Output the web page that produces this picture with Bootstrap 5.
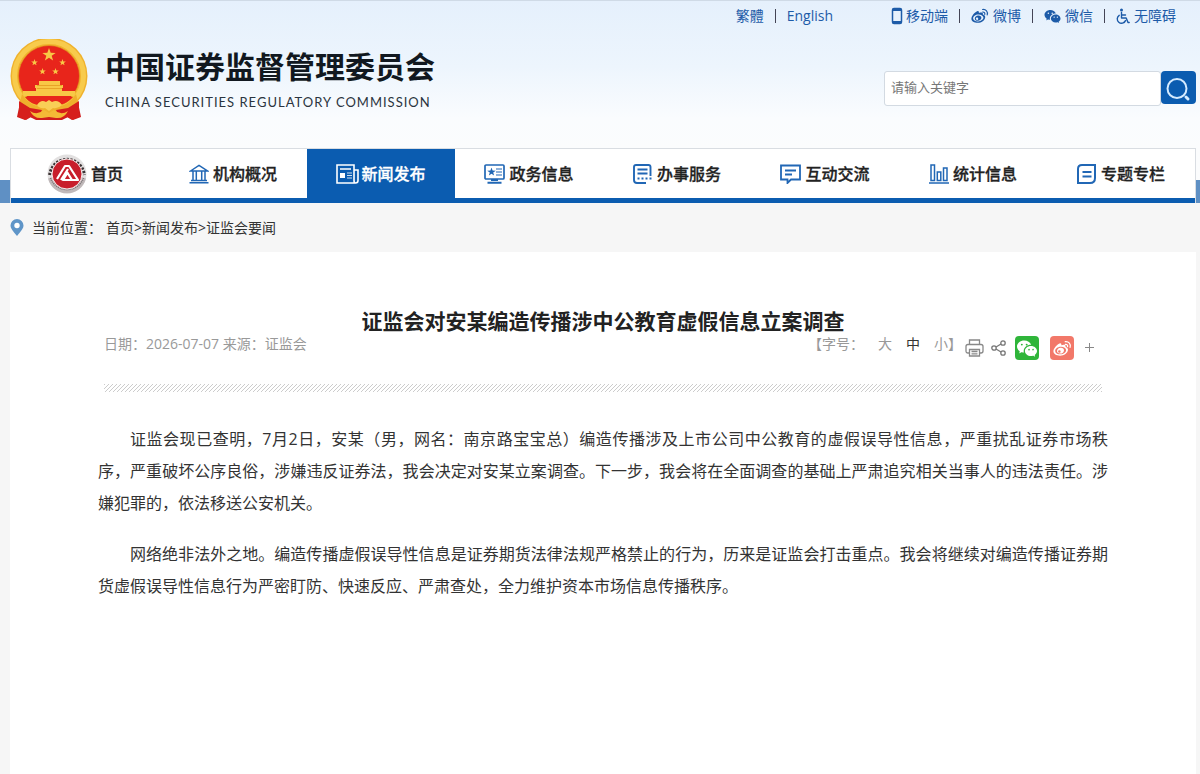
<!DOCTYPE html>
<html lang="zh-CN">
<head>
<meta charset="utf-8">
<meta name="viewport" content="width=device-width, initial-scale=1">
<title>证监会对安某编造传播涉中公教育虚假信息立案调查</title>
<link href="https://cdn.jsdelivr.net/npm/bootstrap@5.3.0/dist/css/bootstrap.min.css" rel="stylesheet">
<style>
  :root { --brand: #0b5cb0; --link: #1d5ba8; }
  body { font-family: "Open Sans", "Noto Sans CJK SC", sans-serif; font-size: 14px; color: #333; background: #f6f6f6; }
  a { color: inherit; text-decoration: none; }
  svg { display: block; flex: none; }
  .wrap { margin-left: 10px; margin-right: 4px; }
  .site-head { background: linear-gradient(#e5f0fc, #edf5fd 45%, #fafcfe 80%, #fbfcfd); border-top: 1px solid #cfdae6; }
  .top-links { height: 30px; line-height: 28px; color: var(--link); padding-right: 20px; }
  .top-links .sep { width: 1px; height: 14px; background: #445; margin: 0 11px; }
  .top-links .to-mobile { margin-left: 57px; gap: 2px; }
  .brand-row { height: 117px; }
  .org { color: #111820; padding-left: 17px; }
  .org-cn { font: 700 30px/36px "Noto Sans CJK SC", sans-serif; }
  .org-en { font: 13px/20px Lato, sans-serif; letter-spacing: 1px; margin-top: 9px; color: #2b3440; }
  .search { width: 312px; margin-top: 40px; }
  .search .form-control { height: 35px; border: 1px solid #d3dae2; border-radius: 3px; padding: 0 6px 3px; font-size: 13px; }
  .search .form-control::placeholder { color: #777; }
  .search button { width: 35px; height: 33px; padding: 0; background: var(--brand); border: 0; border-radius: 4px; }
  .nav-band { background: linear-gradient(#fbfcfd 32px, #5f90c4 32px); }
  .main-nav { background: #fff; border: 1px solid #d9dde2; border-bottom: 0; height: 55px; box-shadow: inset 0 -5px var(--brand); padding-bottom: 5px; }
  .main-nav a { font-size: 16px; font-weight: 500; color: #222; gap: 4px; -webkit-text-stroke: .3px; }
  .main-nav a svg { color: #2167b5; }
  .main-nav .current { background: var(--brand); color: #fff; gap: 2px; }
  .main-nav .current svg { color: #fff; }
  .crumbs { height: 49px; }
  .sheet { background: #fff; min-height: 522px; padding: 55px 88px 40px 88px; }
  .headline { font-size: 21px; line-height: 28px; font-weight: 700; color: #222; margin: 0; }
  .meta { color: #999; line-height: 18px; margin: 0 6px; height: 49px; }
  .meta button { border: 0; background: none; padding: 0; color: inherit; }
  .meta .sized { color: #333; }
  .meta .sizes { gap: 14px; }
  .meta .tools { padding: 1px 7px 0 3px; gap: 7px; }
  .meta .shares { gap: 11px; padding-left: 2px; }
  .meta .tile { width: 24px; height: 24px; border-radius: 4px; color: #fff; }
  .meta .wx { background: #2fb53a; }
  .meta .wb { background: #f27869; }
  .hatch { height: 8px; margin: 0 6px; background: linear-gradient(135deg, #ccc 12.5%, #fff 12.5% 50%, #ccc 50% 62.5%, #fff 62.5%) 0 0 / 4px 4px; }
  .story { font-size: 16px; line-height: 32px; text-align: justify; padding-top: 31px; }
  .story p { text-indent: 2em; margin-bottom: 19px; }
</style>
</head>
<body>
<svg width="0" height="0" class="position-absolute" aria-hidden="true">
  <symbol id="wechat" viewBox="0 0 16 16"><g fill="currentColor"><path d="M11.176 14.429c-2.665 0-4.826-1.8-4.826-4.018 0-2.22 2.159-4.02 4.824-4.02S16 8.191 16 10.411c0 1.21-.65 2.301-1.666 3.036a.32.32 0 0 0-.12.366l.218.81a.6.6 0 0 1 .029.117.166.166 0 0 1-.162.162.2.2 0 0 1-.092-.03l-1.057-.61a.5.5 0 0 0-.256-.074.5.5 0 0 0-.142.021 5.7 5.7 0 0 1-1.576.22M9.064 9.542a.647.647 0 1 0 .557-1 .645.645 0 0 0-.646.647.6.6 0 0 0 .09.353Zm3.232.001a.646.646 0 1 0 .546-1 .645.645 0 0 0-.644.644.63.63 0 0 0 .098.356"/><path d="M0 6.826c0 1.455.781 2.765 2.001 3.656a.385.385 0 0 1 .143.439l-.161.6-.1.373a.5.5 0 0 0-.032.14.19.19 0 0 0 .193.193q.06 0 .111-.029l1.268-.733a.6.6 0 0 1 .308-.088q.088 0 .171.025a6.8 6.8 0 0 0 1.625.26 4.5 4.5 0 0 1-.177-1.251c0-2.936 2.785-5.02 5.824-5.02l.15.002C10.587 3.429 8.392 2 5.796 2 2.596 2 0 4.16 0 6.826m4.632-1.555a.77.77 0 1 1-1.54 0 .77.77 0 0 1 1.54 0m3.875 0a.77.77 0 1 1-1.54 0 .77.77 0 0 1 1.54 0"/></g></symbol>
  <symbol id="weibo" viewBox="0 0 18 16"><path fill="currentColor" fill-rule="evenodd" d="M6.2 3.2c1.2-.5 2 .2 1.7 1.8 2.200-.9 4.500-.6 4 1.500 1.500.5 2.500 1.400 2.300 3-.3 2.900-3.700 5.300-7.500 5.300C3.200 14.800.4 13.300.4 10.700c0-2.700 3.300-6.600 5.800-7.500ZM7.300 6.400c-2.900.1-5.200 1.900-5.200 3.900s2.200 3.300 5 3.200c3-.2 5.300-2 5.300-3.900 0-2-2.300-3.300-5.100-3.200Zm-.2 1c2-.2 3.400.9 3.300 2.400-.1 1.700-1.600 2.900-3.500 3-1.900.1-3.200-1-3.100-2.400.1-1.600 1.500-2.900 3.300-3Zm-1.100 2.200a1.200 1.200 0 1 0 .1 2.400 1.200 1.200 0 0 0-.1-2.400Z"/><g fill="none" stroke="currentColor" stroke-width="1.200" stroke-linecap="round"><path d="M11.600 1.500c3.300-.5 5.600 2.400 4.600 5.400M11.700 4c1.500-.1 2.400 1 2.100 2.300"/></g></symbol>
  <symbol id="star" viewBox="-10 -10 20 20"><path d="M0-10 2.400-3.200 9.500-3 3.800 1.200 5.900 8 0 4-5.900 8-3.800 1.200-9.500-3-2.400-3.200Z"/></symbol>
</svg>

<header class="site-head">
  <div class="wrap">
    <div class="top-links d-flex justify-content-end align-items-center">
      <a href="#" lang="zh-Hant">繁體</a><span class="sep"></span><a href="#">English</a>
      <a href="#" class="to-mobile d-flex align-items-center"><svg width="14" height="18" viewBox="0 0 14 18" fill="none" stroke="currentColor"><rect x="2.500" y="1.500" width="9" height="15" rx="1.500" stroke-width="1.500"/><path d="M3 3h8M3 15h8" stroke-width="2"/></svg>移动端</a><span class="sep"></span>
      <a href="#" class="d-flex align-items-center gap-1"><svg width="18" height="16"><use href="#weibo"/></svg>微博</a><span class="sep"></span>
      <a href="#" class="d-flex align-items-center gap-1"><svg width="17" height="16" viewBox="0 0 17 16"><use href="#wechat" width="17" height="16"/></svg>微信</a><span class="sep"></span>
      <a href="#" class="d-flex align-items-center gap-1"><svg width="14" height="18" viewBox="1 0 14 18" fill="none" stroke="currentColor" stroke-width="1.400" stroke-linecap="round" stroke-linejoin="round"><circle cx="6.500" cy="3" r="1.500" fill="currentColor" stroke="none"/><path d="M6.500 5.500V11h4.700l1.800 4.500h1.200M6.500 8h4M4.200 8.300a4.300 4.300 0 1 0 6.300 5.300"/></svg>无障碍</a>
    </div>
    <div class="brand-row d-flex justify-content-between">
      <a href="#" class="d-flex pt-2" aria-label="中国证券监督管理委员会">
        <svg width="78" height="82" viewBox="0 0 78 82">
          <path d="M12 54 7 78l8 3 5-3 6 3h26l6-3 5 3 8-3-5-24Z" fill="#cf1d1c"/>
          <circle cx="39" cy="37" r="38.500" fill="#f0b22c"/>
          <circle cx="39" cy="37" r="34.500" fill="none" stroke="#f8cb4c" stroke-width="5"/>
          <circle cx="39" cy="37" r="30.500" fill="#e8251b" stroke="#dc9a20" stroke-width=".6"/>
          <g fill="#f8c846"><use href="#star" x="32" y="9" width="14" height="14"/><use href="#star" x="21" y="20" width="7" height="7"/><use href="#star" x="49" y="20" width="7" height="7"/><use href="#star" x="29" y="29" width="7" height="7"/><use href="#star" x="42" y="29" width="7" height="7"/>
          <path d="M29 42h21v4h3v3h-1v3h13q1 3-1 5H14q-2-2-1-5h13v-3h-1v-3h4Z"/></g>
          <path d="M27 46.500h25M27 49.500h25" stroke="#e39b20" stroke-width=".8"/>
          <path d="M15 58h48c-5 6-12 8-18 9H33c-7-1-14-3-18-9Z" fill="#e8251b"/>
          <path d="M12 55q9 14 27 14t27-14l2 8Q58 77 39 77T10 63Z" fill="#efb02c"/>
          <path d="M27 66q4-6 9-3l3-2 3 2q6-3 10 3-4 4-9 3l-4 3-4-3q-5 1-8-3Z" fill="#f9cf56"/>
          <path d="m9 62 11 7 12 2-4 9-7-2-5 3-7-3Zm60 0-11 7-12 2 4 9 7-2 5 3 7-3Z" fill="#d61f1c"/>
          <path d="M20 72q7 5 14-1l5 3 5-3q7 6 14 1-4 8-12 7l-7-1-7 1q-8 1-12-7Z" fill="#f4b936"/>
        </svg>
        <span class="org pt-2"><span class="org-cn d-block">中国证券监督管理委员会</span><span class="org-en d-block">CHINA SECURITIES REGULATORY COMMISSION</span></span>
      </a>
      <form class="search d-flex" role="search">
        <input class="form-control" type="search" placeholder="请输入关键字" aria-label="请输入关键字">
        <button type="button" aria-label="搜索"><svg width="35" height="33" viewBox="0 0 35 33" fill="none" stroke="#d5ebff" stroke-linecap="round"><circle cx="16" cy="17.500" r="9.500" stroke-width="2"/><path d="m25 26 2 2" stroke-width="3"/></svg></button>
      </form>
    </div>
  </div>
</header>

<div class="nav-band">
  <div class="wrap">
    <nav class="main-nav d-flex">
      <a href="#" class="col d-flex align-items-center justify-content-center"><svg width="40" height="42" viewBox="0 0 40 42"><circle cx="20" cy="21" r="19.500" fill="#e2e0e0"/><path d="M2.600 22a17.500 17.500 0 0 1 34.800 0" fill="none" stroke="#3b3334" stroke-width="3" stroke-dasharray="2.200 1.400"/><path d="M3 25a17.500 17.500 0 0 0 34 0" fill="none" stroke="#c0b9ba" stroke-width="4"/><path d="M3.500 25a17.500 17.500 0 0 0 33 0" fill="none" stroke="#776e70" stroke-width="1.500" stroke-dasharray="1 1"/><circle cx="20" cy="21" r="15" fill="#c81e2b" stroke="#f5e8e8"/><g fill="none" stroke="#fff" stroke-width="2.200" stroke-linejoin="round"><path d="m10 26 8-13h4l9 14H16l5-8M14 27l7-11M25 27l-5-8"/></g></svg>首页</a>
      <a href="#" class="col d-flex align-items-center justify-content-center"><svg width="20" height="20" viewBox="0 0 20 20" fill="none" stroke="currentColor" stroke-width="1.500"><path d="M1.500 7 10 1.300 18.500 7ZM.5 18.700h19M2 16.500h16M4 7v9M7.300 7v9M12.700 7v9M16 7v9"/></svg>机构概况</a>
      <a href="#" class="current col d-flex align-items-center justify-content-center" aria-current="page"><svg width="23" height="20" viewBox="0 0 23 20" fill="none" stroke="currentColor" stroke-width="1.600"><path d="M18 1H1v18h18.500q2.500 0 2.500-2.500V6h-4ZM18 6v10.500q0 2.500 1.500 2.500M4 5h11"/><path d="M4 9h5v5H4Z" fill="currentColor" stroke="none"/><path d="M11 9h5M11 11.500h5M11 14h5" stroke-width="1" opacity=".8"/></svg>新闻发布</a>
      <a href="#" class="col d-flex align-items-center justify-content-center"><svg width="21" height="20" viewBox="0 0 21 20" fill="none" stroke="currentColor" stroke-width="1.700"><rect x="1" y="1" width="19" height="14" rx="1"/><path d="M7 16h7M3.500 18.800h14" stroke-width="2"/><path d="M12 5h6M12 8h6M12 11h6" stroke-width="1.200"/><use href="#star" x="3" y="3.500" width="9" height="9" fill="currentColor" stroke="none"/></svg>政务信息</a>
      <a href="#" class="col d-flex align-items-center justify-content-center"><svg width="20" height="20" viewBox="0 0 20 20" fill="none" stroke="currentColor" stroke-width="1.900"><path d="M17.500 12V3q0-2-2-2H3Q1 1 1 3v13q0 3 3 3h9M4.500 5.500h10M4.500 9.500h10"/><path d="M4.500 14.500h15" stroke-dasharray="2 2"/></svg>办事服务</a>
      <a href="#" class="col d-flex align-items-center justify-content-center"><svg width="21" height="20" viewBox="0 0 21 20" fill="none" stroke="currentColor" stroke-width="1.800"><path d="M1 1.500h19v14h-9L7.500 19v-3.500H1ZM5 6.500h11M5 10.500h7"/></svg>互动交流</a>
      <a href="#" class="col d-flex align-items-center justify-content-center"><svg width="20" height="20" viewBox="0 0 20 20" fill="none" stroke="currentColor" stroke-width="1.500"><path d="M2 1h3.500v15.500H2ZM8.300 8h3.500v8.500H8.300ZM14.500 4H18v12.500h-3.500ZM0 19h20"/></svg>统计信息</a>
      <a href="#" class="col d-flex align-items-center justify-content-center"><svg width="20" height="20" viewBox="0 0 20 20" fill="none" stroke="currentColor" stroke-width="2"><path d="M5 1h13v13q0 5-5 5H1V5q0-4 4-4ZM5.500 8h9M5.500 12.500h9"/></svg>专题专栏</a>
    </nav>
  </div>
</div>

<nav class="crumbs wrap d-flex align-items-center" aria-label="当前位置">
  <svg width="14" height="18" viewBox="0 0 14 18"><path d="M7 17C3 12 .5 9.500 .5 6.500a6.500 6.500 0 0 1 13 0C13.500 9.500 11 12 7 17Z" fill="#5f95c8"/><circle cx="7" cy="6.500" r="2.700" fill="#fff"/></svg>
  <span class="ms-2">当前位置：</span><span class="ms-1"><a href="#">首页</a>&gt;<a href="#">新闻发布</a>&gt;<a href="#">证监会要闻</a></span>
</nav>

<main class="wrap">
  <article class="sheet">
    <h1 class="headline text-center">证监会对安某编造传播涉中公教育虚假信息立案调查</h1>
    <div class="meta d-flex justify-content-between align-items-start">
      <span>日期：2026-07-07 来源：证监会</span>
      <div class="d-flex align-items-start">
        <div class="sizes d-flex"><span>【字号：</span><button type="button">大</button><button type="button" class="sized">中</button><button type="button">小】</button></div>
        <div class="tools d-flex align-items-center">
          <button type="button" aria-label="打印"><svg width="19" height="18" viewBox="0 0 19 18" fill="none" stroke="#888" stroke-width="1.300"><path d="M4.500 5.500V1h10v4.500M4.500 14H3q-2 0-2-2V7.500q0-2 2-2h13q2 0 2 2V12q0 2-2 2h-1.500M4.500 10.500h10V17h-10ZM6.500 12.500h6M6.500 14.800h6"/></svg></button>
          <button type="button" aria-label="分享"><svg width="15" height="16" viewBox="0 0 15 16" fill="none" stroke="#777" stroke-width="1.300"><circle cx="3" cy="8" r="2.200"/><circle cx="12" cy="3" r="2.200"/><circle cx="12" cy="13" r="2.200"/><path d="m5 7 5-3M5 9l5 3"/></svg></button>
          <div class="shares d-flex align-items-center">
            <button type="button" class="tile wx d-flex align-items-center justify-content-center" aria-label="微信"><svg width="20" height="20"><use href="#wechat"/></svg></button>
            <button type="button" class="tile wb d-flex align-items-center justify-content-center" aria-label="微博"><svg width="19" height="17"><use href="#weibo"/></svg></button>
            <button type="button" aria-label="更多"><svg width="10" height="12" viewBox="0 0 10 12" stroke="#888"><path d="M4.500 1v9M0 5.500h9"/></svg></button>
          </div>
        </div>
      </div>
    </div>
    <div class="hatch"></div>
    <div class="story">
      <p>证监会现已查明，7月2日，安某（男，网名：南京路宝宝总）编造传播涉及上市公司中公教育的虚假误导性信息，严重扰乱证券市场秩序，严重破坏公序良俗，涉嫌违反证券法，我会决定对安某立案调查。下一步，我会将在全面调查的基础上严肃追究相关当事人的违法责任。涉嫌犯罪的，依法移送公安机关。</p>
      <p>网络绝非法外之地。编造传播虚假误导性信息是证券期货法律法规严格禁止的行为，历来是证监会打击重点。我会将继续对编造传播证券期货虚假误导性信息行为严密盯防、快速反应、严肃查处，全力维护资本市场信息传播秩序。</p>
    </div>
  </article>
</main>
<script src="https://cdn.jsdelivr.net/npm/bootstrap@5.3.0/dist/js/bootstrap.bundle.min.js"></script>
</body>
</html>
